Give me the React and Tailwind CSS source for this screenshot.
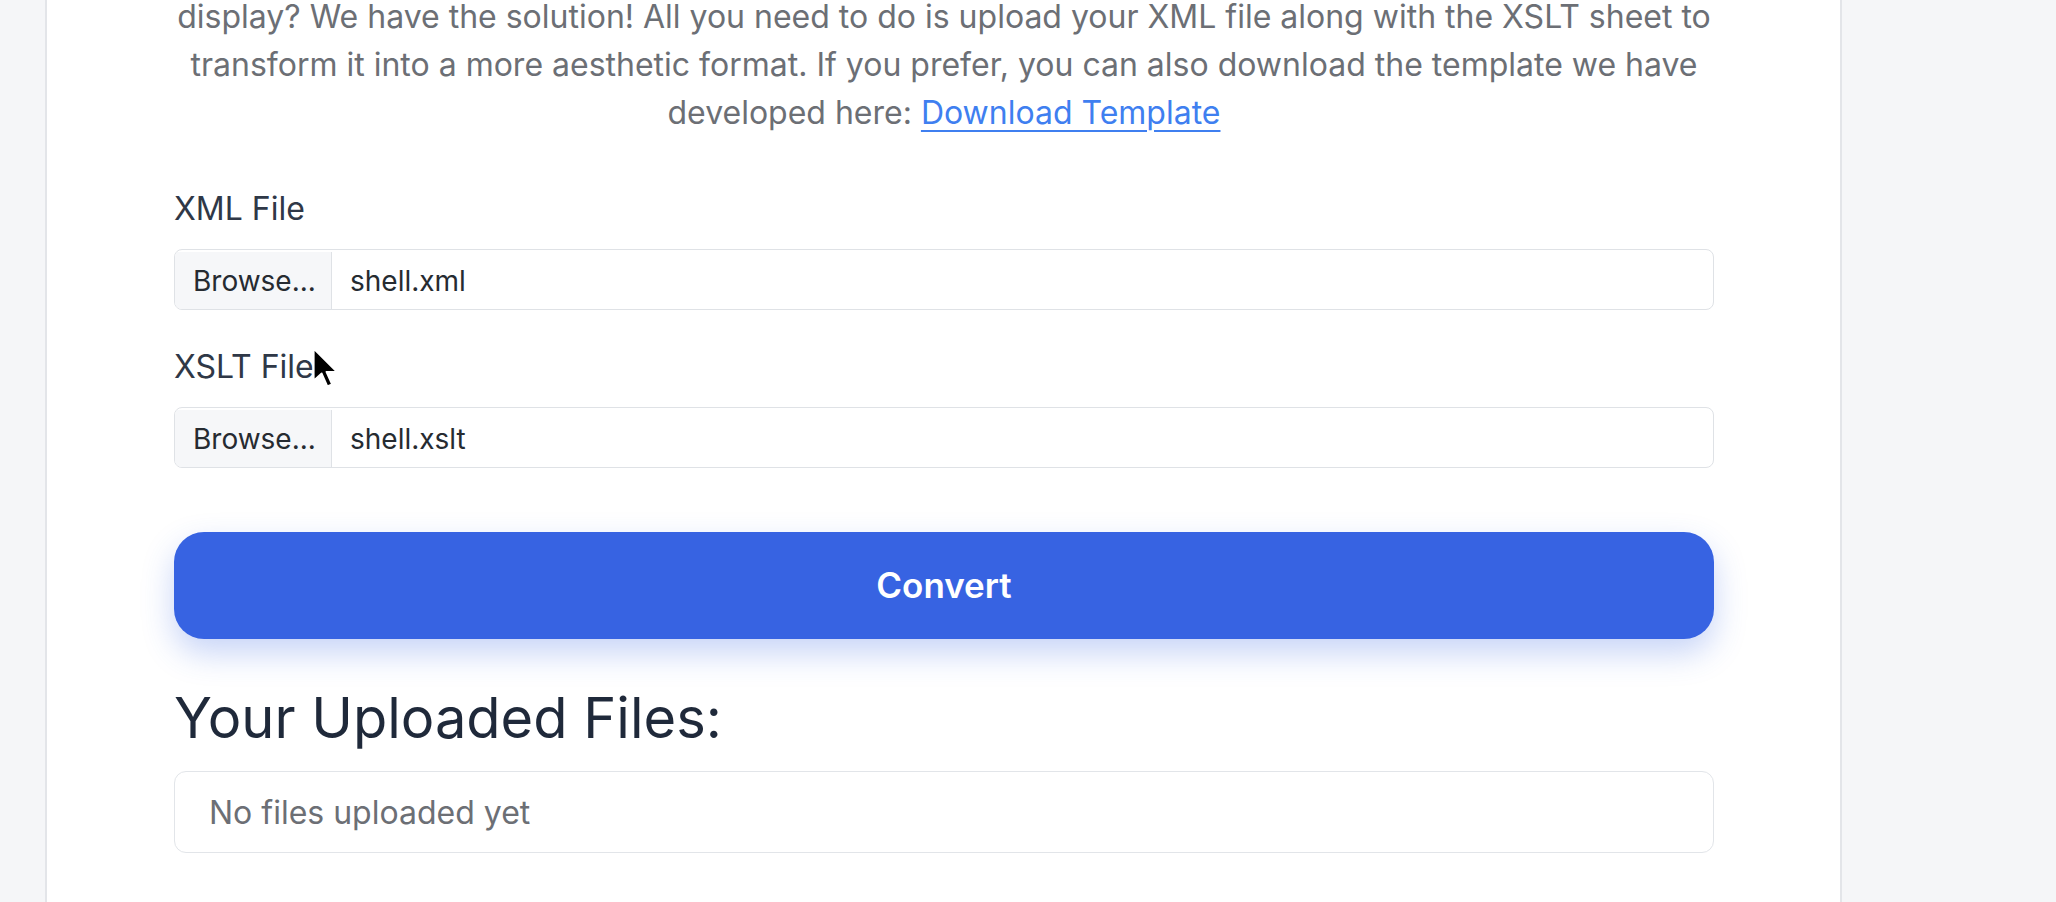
const font = { fontFamily: 'Inter, "Noto Sans", sans-serif' }

const FileField = ({ label, fileName, labelClass }) => {
  return (
    <div className="flex flex-col">
      <label className={`text-[32px] leading-[48px] text-[#2f3847] ${labelClass}`}>{label}</label>
      <div className="mt-[16px] flex h-[61px] w-full overflow-hidden rounded-[8px] border border-[#dfe2e6] bg-white pt-[2px] text-[28px] leading-[42px] text-[#262b31]">
        <div className="flex w-[157px] shrink-0 items-center border-r border-[#dfe2e6] bg-[#f6f7f9] pl-[18px]">
          Browse...
        </div>
        <div className="flex items-center pl-[18px]">{fileName}</div>
      </div>
    </div>
  )
}

const Cursor = () => (
  <svg
    className="absolute left-[312px] top-[347px]"
    width="29"
    height="45"
    viewBox="0 0 18 28"
  >
    <path
      d="M1 1 L1 21 L6 16.5 L9.5 24.5 L12.5 23.2 L9 15.5 L15.5 15.5 Z"
      fill="#000"
      stroke="#fff"
      strokeWidth="1.2"
      strokeLinejoin="round"
    />
  </svg>
)

const App = () => {
  return (
    <div className="relative h-[902px] w-full overflow-hidden bg-[#f5f6f8]" style={font}>
      <div className="ml-[45px] flow-root h-[902px] w-[1797px] border-x-2 border-[#e3e5e9] bg-white">
        <div className="pl-[127px] pr-[126px]">
          <p className="-mt-[7px] text-center text-[32px] leading-[48px] text-[#6c6f75]">
            <span className="block whitespace-nowrap">
              display? We have the solution! All you need to do is upload your XML file along with the XSLT sheet to
            </span>
            <span className="block whitespace-nowrap">
              transform it into a more aesthetic format. If you prefer, you can also download the template we have
            </span>
            <span className="block whitespace-nowrap">
              developed here:{' '}
              <a
                href="#"
                className="text-[#3f7ff0] underline decoration-2 underline-offset-[6px]"
              >
                Download Template
              </a>
            </span>
          </p>

          <form className="flex flex-col">
            <FileField label="XML File" fileName="shell.xml" labelClass="mt-[48px]" />
            <FileField label="XSLT File" fileName="shell.xslt" labelClass="mt-[33px]" />

            <button
              type="button"
              className="mt-[64px] h-[107px] w-full rounded-[30px] bg-[#3763e2] text-[35px] font-semibold text-white shadow-[0_14px_32px_rgba(55,99,226,0.28)]"
            >
              Convert
            </button>
          </form>

          <h2 className="mt-[46px] text-[56px] leading-[67px] text-[#1f293a]">
            Your Uploaded Files:
          </h2>
          <div className="mt-[19px] h-[82px] rounded-[12px] border border-[#e2e5e9] pl-[34px] pt-[17px] text-[32px] leading-[48px] text-[#6c6f75]">
            No files uploaded yet
          </div>
        </div>
      </div>
      <Cursor />
    </div>
  )
}

export default App
